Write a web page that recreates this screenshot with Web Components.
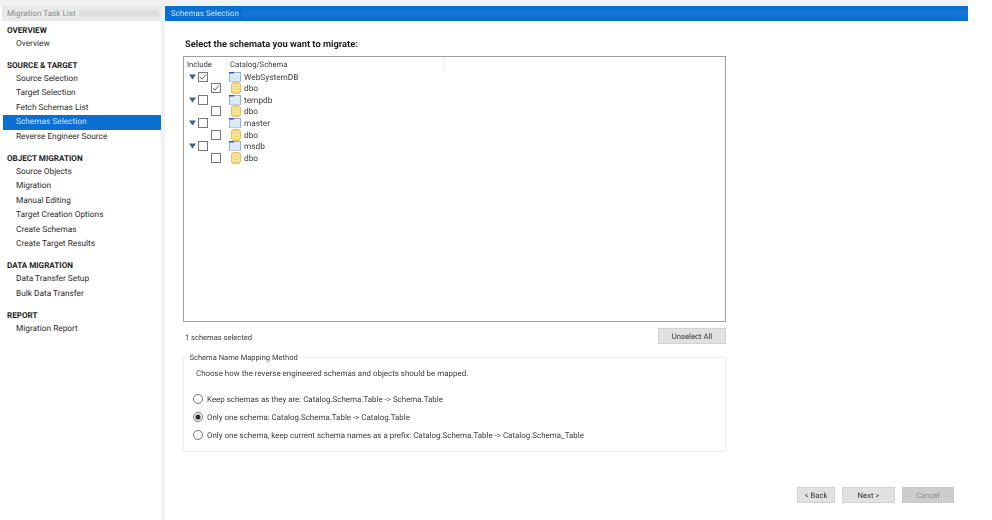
<!DOCTYPE html>
<html><head><meta charset="utf-8">
<style>
html,body{margin:0;padding:0;background:#fff}
body{width:992px;height:520px;overflow:hidden;font-family:Roboto,"Noto Sans",sans-serif;font-size:7.95px;color:#333;text-rendering:geometricPrecision}
</style></head><body>
<wiz-app>
<nav-list slot="side">
<nav-group title="OVERVIEW"><nav-item>Overview</nav-item></nav-group>
<nav-group title="SOURCE &amp; TARGET"><nav-item>Source Selection</nav-item><nav-item>Target Selection</nav-item><nav-item>Fetch Schemas List</nav-item><nav-item selected>Schemas Selection</nav-item><nav-item>Reverse Engineer Source</nav-item></nav-group>
<nav-group title="OBJECT MIGRATION"><nav-item>Source Objects</nav-item><nav-item>Migration</nav-item><nav-item>Manual Editing</nav-item><nav-item>Target Creation Options</nav-item><nav-item>Create Schemas</nav-item><nav-item>Create Target Results</nav-item></nav-group>
<nav-group title="DATA MIGRATION"><nav-item>Data Transfer Setup</nav-item><nav-item>Bulk Data Transfer</nav-item></nav-group>
<nav-group title="REPORT"><nav-item>Migration Report</nav-item></nav-group>
</nav-list>
<schema-page slot="main"></schema-page>
</wiz-app>
<script>
function def(name,html){customElements.define(name,class extends HTMLElement{connectedCallback(){if(this.shadowRoot)return;const r=this.attachShadow({mode:'open'});r.innerHTML=typeof html==='function'?html(this):html;}});}
const dots="background:repeating-conic-gradient(var(--dot) 0 25%,transparent 0 50%) 0 0/2px 2px;";
def('wiz-app',`<style>
:host{display:grid;grid-template-columns:161px 4px 803px 24px;grid-template-rows:6px 514px;width:992px;height:520px;filter:blur(.3px)}
.top{grid-column:1/4;background:#f1f1f1}
.side{background:#fff;min-width:0}
.gut{background:#f1f1f1}
.main{min-width:0}
.blank{grid-row:1/3;grid-column:4;background:#fff}
</style>
<div class="top"></div><div class="blank"></div>
<div class="side"><slot name="side"></slot></div><div class="gut"></div><div class="main"><slot name="main"></slot></div>`);
def('nav-list',`<style>
:host{display:block;padding-left:2px}
.hd{height:15px;background:#e9e9e9;display:flex;align-items:center;gap:3px;padding-left:5px;color:#8a8a8a;font-size:8.15px;white-space:nowrap}
.hd span{margin-top:-1px}
.hd i{flex:1;height:7px;margin-right:2px;--dot:#d2d2d2;${dots}}
.b{padding-top:.5px}
</style><div class="hd"><span>Migration Task List</span><i></i></div><div class="b"><slot></slot></div>`);
def('nav-group',h=>`<style>
:host{display:block;margin-bottom:5.600px}
.t{height:15px;line-height:16.5px;padding-left:5px;font-weight:700;color:#1e1e1e;font-size:8.1px;white-space:nowrap}
</style><div class="t">${h.getAttribute('title').replace('&','&amp;')}</div><slot></slot>`);
def('nav-item',`<style>
:host{display:block;height:14.5px;line-height:15.5px;padding-left:13px;margin-left:1px;color:#2c2c2c;white-space:nowrap;font-size:8.3px;overflow:hidden}
:host([selected]){background:#0a6fd1;color:#cfe4f7}
</style><slot></slot>`);
def('cat-icon',`<style>:host{display:inline-flex}</style><svg width="12" height="10" viewBox="0 0 12 10"><rect x=".5" y=".5" width="11" height="9" fill="#e6f0fb" stroke="#8fb3e2"/><rect x="0" y="0" width="5" height="1.500" fill="#3a4fc0"/><rect x="1" y="2.500" width="10" height="7" fill="#dbe9f8"/></svg>`);
def('db-icon',`<style>:host{display:inline-flex}</style><svg width="10" height="12" viewBox="0 0 10 12"><path d="M.5 2.200C.5 1 2.500.4 5 .4s4.500.6 4.500 1.800v7.600c0 1.200-2 1.800-4.500 1.800S.5 11 .5 9.800z" fill="#f6d67c" stroke="#d9ae4c" stroke-width=".8"/><path d="M.8 2.600c1 1.200 7.400 1.200 8.400 0M.8 5.200c1 1.200 7.400 1.200 8.400 0M.8 7.800c1 1.200 7.400 1.200 8.400 0" fill="none" stroke="#fff3c8" stroke-width=".9"/></svg>`);
def('chk-box',h=>`<style>:host{display:inline-flex}</style><svg width="10" height="10" viewBox="0 0 10 10"><rect x=".5" y=".5" width="9" height="9" fill="#fff" stroke="#777"/>${h.hasAttribute('checked')?'<path d="M2 5l2 2.200L8 2.300" fill="none" stroke="#666" stroke-width="1"/>':''}</svg>`);
def('tree-row',h=>{const child=h.hasAttribute('child');return `<style>
:host{display:grid;grid-template-columns:43px 1fr;height:11.55px;align-items:center;white-space:nowrap}
.a{display:flex;align-items:center;height:11.55px;padding-left:${child?'27px':'5px'};gap:2px;box-sizing:border-box}
.a svg{flex:none}
.b{display:flex;align-items:center;height:11.55px;color:#3a3a3a;font-size:8.3px}
.b span{margin-top:2px}
</style><div class="a">${child?'':'<svg width="7" height="6" viewBox="0 0 7 6"><path d="M0 .5h7L3.500 5.500z" fill="#3f5f8c"/></svg>'}<chk-box ${h.hasAttribute('checked')?'checked':''}></chk-box></div><div class="b" style="gap:${child?'3.500px':'3px'};padding-left:${child?'3.500px':'2px'}">${child?'<db-icon></db-icon>':'<cat-icon></cat-icon>'}<span>${h.getAttribute('name')}</span></div>`});
def('schema-tree',`<style>
:host{display:block;box-sizing:border-box;width:543px;height:266px;border:1px solid #a0a0a0;background:#fff}
.h{display:grid;grid-template-columns:43px 217px 1fr;height:13px;color:#3a3a3a;line-height:15px;font-size:7.700px}
.h div{padding-left:3px;border-right:1px solid #efefef;white-space:nowrap;height:14px}
.h div:last-child{border:0}
.r{margin-top:1px}
</style><div class="h"><div>Include</div><div>Catalog/Schema</div><div></div></div><div class="r"><slot></slot></div>`);
def('gray-btn',h=>`<style>
:host{display:inline-flex;align-items:center;justify-content:center;box-sizing:border-box;height:16px;padding-top:1px;background:#e1e1e1;border:1px solid #d2d2d2;color:${h.hasAttribute('disabled')?'#8c8c8c':'#333'};white-space:nowrap;font-size:7.700px}
:host([disabled]){background:#cdcdcd;border-color:#c8c8c8}
</style><slot></slot>`);
def('radio-row',h=>`<style>
:host{display:flex;align-items:center;gap:4px;height:18px;white-space:nowrap;color:#3a3a3a}
svg{flex:none}
</style><svg width="10" height="10" viewBox="0 0 10 10"><circle cx="5" cy="5" r="4.500" fill="#fff" stroke="#666" stroke-width=".9"/>${h.hasAttribute('on')?'<circle cx="5" cy="5" r="2.600" fill="#333"/>':''}</svg><slot></slot>`);
def('map-box',`<style>
:host{display:block;box-sizing:border-box;width:543px;height:95px;border:1px solid #eee;padding:0 0 0 9px;margin-top:13px}
.l{display:inline-block;background:#fff;margin:-6px 0 0 -5px;padding:0 1.500px;height:11px;line-height:11px;color:#3a3a3a;vertical-align:top;font-size:7.550px}
.d{height:11px;line-height:11px;margin-top:1px;padding-left:3px;color:#3a3a3a}
.o{margin-top:11px}
</style><div class="l">Schema Name Mapping Method</div><div class="d">Choose how the reverse engineered schemas and objects should be mapped.</div><div class="o"><slot></slot></div>`);
def('schema-page',`<style>
:host{display:block;height:514px;color:#3a3a3a}
.bar{height:15px;background:#0a6fd1;display:flex;align-items:center;gap:3px;color:#cfe4f7;padding-left:6px;white-space:nowrap;font-size:8px}
.bar i{flex:1;height:7px;--dot:#1f7ad5;${dots}}
.c{padding:16px 0 0 18px}
h1{margin:0 0 0 2px;height:19px;line-height:15px;font-size:9.3px;font-weight:700;color:#1e1e1e}
.sel{display:flex;justify-content:space-between;align-items:center;width:543px;height:16px;margin-top:6px;padding-left:2px;box-sizing:border-box}
.sel span{font-size:7.550px;margin-top:2px}
.btns{display:flex;justify-content:flex-end;gap:7px;padding-right:14px;margin-top:35px}
</style><div class="bar"><span>Schemas Selection</span><i></i></div><div class="c"><h1>Select the schemata you want to migrate:</h1>
<schema-tree>
<tree-row name="WebSystemDB" checked></tree-row><tree-row name="dbo" child checked></tree-row>
<tree-row name="tempdb"></tree-row><tree-row name="dbo" child></tree-row>
<tree-row name="master"></tree-row><tree-row name="dbo" child></tree-row>
<tree-row name="msdb"></tree-row><tree-row name="dbo" child></tree-row>
</schema-tree>
<div class="sel"><span>1 schemas selected</span><gray-btn style="width:68px">Unselect All</gray-btn></div>
<map-box>
<radio-row>Keep schemas as they are: Catalog.Schema.Table -&gt; Schema.Table</radio-row>
<radio-row on>Only one schema: Catalog.Schema.Table -&gt; Catalog.Table</radio-row>
<radio-row>Only one schema, keep current schema names as a prefix: Catalog.Schema.Table -&gt; Catalog.Schema_Table</radio-row>
</map-box>
<div class="btns"><gray-btn style="width:38px">&lt; Back</gray-btn><gray-btn style="width:53px">Next &gt;</gray-btn><gray-btn disabled style="width:52px">Cancel</gray-btn></div>
</div>`);
</script>
</body></html>
